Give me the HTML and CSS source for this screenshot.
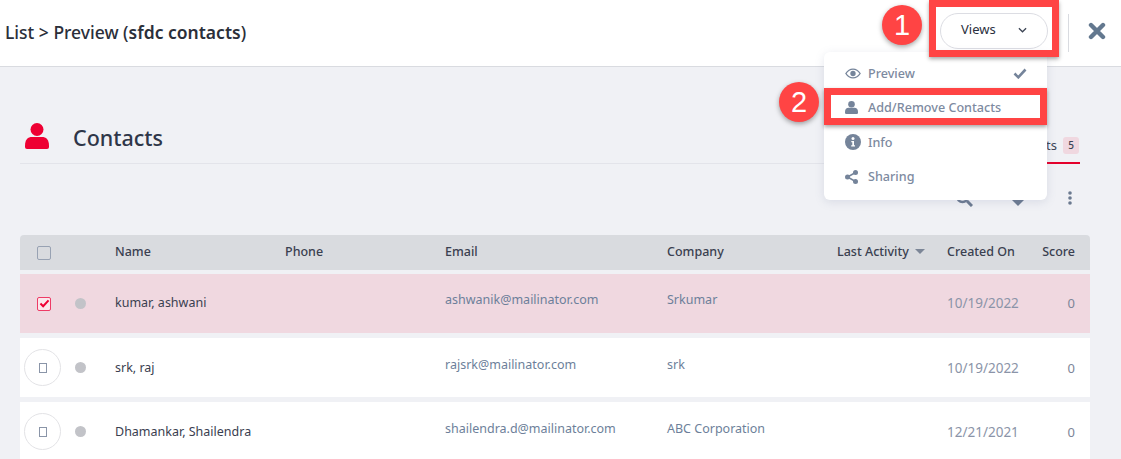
FILE: index.html
```html
<!DOCTYPE html>
<html lang="en">
<head>
<meta charset="utf-8">
<title>List Preview</title>
<link rel="stylesheet" href="styles.css">
</head>
<body>
<div class="page">
  <header class="topbar">
    <h1 class="crumb">List &gt; Preview (<strong>sfdc contacts</strong>)</h1>
    <div class="top-actions">
      <button class="views-btn"><span>Views</span>
        <svg class="chev" viewBox="0 0 10 6" width="9" height="6"><path d="M1 1l4 4 4-4" fill="none" stroke="#3c4454" stroke-width="1.400"/></svg>
      </button>
      <span class="sep"></span>
      <svg class="close" viewBox="0 0 18 18" width="18" height="18"><path d="M3 3l12 12M15 3L3 15" fill="none" stroke="#63788f" stroke-width="4.400" stroke-linecap="round"/></svg>
    </div>
  </header>

  <main class="content">
    <section class="sec-head">
      <svg class="sec-icon" viewBox="0 0 24 26" width="24" height="26"><circle cx="12" cy="6.500" r="6.500" fill="#ee0033"/><path d="M0 22.500c0-6 3-8.500 7-8.500h10c4 0 7 2.500 7 8.500V24a2 2 0 0 1-2 2H2a2 2 0 0 1-2-2z" fill="#ee0033"/></svg>
      <h2 class="sec-title">Contacts</h2>
      <div class="tab"><span>Contacts</span><b class="badge">5</b></div>
    </section>

    <div class="tools">
      <svg class="search" viewBox="0 0 18 18" width="18" height="18"><circle cx="7.500" cy="7.500" r="5.500" fill="none" stroke="#6b7a90" stroke-width="2.400"/><path d="M12 12l5 5" stroke="#6b7a90" stroke-width="3"/></svg>
      <svg viewBox="0 0 12 6" width="12" height="6" class="caret"><path d="M0 0h12L6 6z" fill="#6b7a90"/></svg>
      <svg viewBox="0 0 4 14" width="4" height="14" class="kebab"><circle cx="2" cy="2" r="1.800" fill="#6b7a90"/><circle cx="2" cy="7" r="1.800" fill="#6b7a90"/><circle cx="2" cy="12" r="1.800" fill="#6b7a90"/></svg>
    </div>

    <div class="table">
      <div class="row head">
        <div class="c-sel"><span class="box"></span></div>
        <div>Name</div><div>Phone</div><div>Email</div><div>Company</div>
        <div class="sort">Last Activity <i class="sort-caret"></i></div>
        <div>Created On</div><div class="num">Score</div>
      </div>
      <div class="row body picked">
        <div class="c-sel"><span class="box on"><svg viewBox="0 0 12 10" width="11" height="9"><path d="M1.500 5l3 3 6-6.500" fill="none" stroke="#ee0033" stroke-width="2.200"/></svg></span><span class="dot"></span></div>
        <div class="txt">kumar, ashwani</div><div></div><div class="soft up">ashwanik@mailinator.com</div><div class="soft up">Srkumar</div><div></div><div class="date">10/19/2022</div><div class="num faint">0</div>
      </div>
      <div class="row body">
        <div class="c-sel"><span class="ring"><i></i></span><span class="dot"></span></div>
        <div class="txt">srk, raj</div><div></div><div class="soft up">rajsrk@mailinator.com</div><div class="soft up">srk</div><div></div><div class="date">10/19/2022</div><div class="num faint">0</div>
      </div>
      <div class="row body">
        <div class="c-sel"><span class="ring"><i></i></span><span class="dot"></span></div>
        <div class="txt">Dhamankar, Shailendra</div><div></div><div class="soft up">shailendra.d@mailinator.com</div><div class="soft up">ABC Corporation</div><div></div><div class="date">12/21/2021</div><div class="num faint">0</div>
      </div>
    </div>
  </main>

  <nav class="menu">
    <a class="item"><svg viewBox="0 0 18 12" width="16" height="11"><path d="M1 6c2-3.200 4.800-5 8-5s6 1.800 8 5c-2 3.200-4.800 5-8 5S3 9.200 1 6z" fill="none" stroke="#75849a" stroke-width="1.500"/><circle cx="9" cy="6" r="3" fill="#75849a"/></svg><span>Preview</span><svg class="tick" viewBox="0 0 14 11" width="14" height="11"><path d="M1.500 5.500l3.800 3.800 7.200-7.800" fill="none" stroke="#75849a" stroke-width="2.600"/></svg></a>
    <a class="item"><svg viewBox="0 0 13 13" width="13" height="13"><circle cx="6.500" cy="3.300" r="3.300" fill="#75849a"/><path d="M0 11c0-3 1.500-4.300 3.500-4.300h6c2 0 3.500 1.300 3.500 4.300v.7a1.300 1.300 0 0 1-1.300 1.300H1.300A1.300 1.300 0 0 1 0 11.700z" fill="#75849a"/></svg><span>Add/Remove Contacts</span></a>
    <a class="item"><svg viewBox="0 0 16 16" width="16" height="16"><circle cx="8" cy="8" r="8" fill="#75849a"/><circle cx="8" cy="4.500" r="1.500" fill="#fff"/><path d="M6.300 7h2.700v4.300h1v1.300H6.200v-1.300h1.100V8.300h-1z" fill="#fff"/></svg><span>Info</span></a>
    <a class="item"><svg viewBox="0 0 13 14" width="13" height="14"><path d="M10.500 2.500l-8 4.500 8 4.500" fill="none" stroke="#75849a" stroke-width="1.500"/><circle cx="10.500" cy="2.500" r="2.500" fill="#75849a"/><circle cx="2.500" cy="7" r="2.500" fill="#75849a"/><circle cx="10.500" cy="11.500" r="2.500" fill="#75849a"/></svg><span>Sharing</span></a>
  </nav>

  <span class="mark mark-a"></span>
  <span class="mark mark-b"></span>
  <span class="num-pin pin-a">1</span>
  <span class="num-pin pin-b">2</span>
</div>
</body>
</html>
```
FILE: styles.css
```css
* { box-sizing: border-box; }
html, body { margin: 0; padding: 0; }
body { font-family: "Noto Sans", "Liberation Sans", sans-serif; color: #2e3648; }
.page { position: relative; width: 1121px; height: 459px; overflow: hidden; background: #f0f1f5; }

.topbar { height: 67px; background: #fff; border-bottom: 1px solid #d9dbe0; display: flex; align-items: center; justify-content: space-between; padding: 0 15px 3px 5px; }
.crumb { margin: 0; font-size: 17.500px; font-weight: 500; color: #2b2f3a; }
.crumb strong { font-weight: 600; }
.top-actions { display: flex; align-items: center; }
.views-btn { width: 108px; height: 36px; margin: 0 0 1px 1px; border: 1px solid #dcdde3; border-radius: 18px; background: #fff; display: flex; align-items: center; justify-content: space-between; padding: 0 20px 4px 20px; font: 400 13px "Noto Sans", sans-serif; color: #2b3040; }
.chev { margin-top: 2px; }
.sep { width: 1px; height: 38px; margin: 3px 19px 0 20px; background: #d9dbe0; }
.close { margin-top: -1px; }

.content { padding: 0 31px 0 20px; }
.sec-head { height: 97px; display: flex; align-items: flex-end; border-bottom: 1px solid #e3e4ea; margin-right: 10px; padding: 0 0 0 5px; position: relative; }
.sec-icon { margin-bottom: 14px; }
.sec-title { margin: 0 0 11px 24px; font-size: 21.500px; font-weight: 500; color: #2e3648; flex: 1; }
.tab { height: 27px; display: flex; align-items: flex-start; gap: 6px; padding-right: 1px; font-size: 13px; line-height: 17px; border-bottom: 2px solid #e4002b; margin-bottom: -1px; color: #3d4556; }
.badge { width: 16px; height: 17px; border-radius: 3px; background: #f0d8e0; font-size: 10px; font-weight: 500; text-align: center; line-height: 17px; }

.tools { height: 71px; display: flex; justify-content: flex-end; align-items: flex-start; gap: 44px; padding: 25px 18px 0 0; }
.search { margin-right: -5px; }
.caret { margin-top: 11px; }
.kebab { margin-top: 2px; }

.table { width: 1070px; }
.row { display: grid; grid-template-columns: 95px 170px 160px 222px 170px 110px 94px 1fr; align-items: center; font-size: 12.500px; }
.row.head { height: 35px; padding-bottom: 2px; background: #d9dbdf; border-radius: 4px 4px 0 0; color: #3a4050; font-weight: 500; margin-bottom: 4px; }
.row.head .c-sel { margin-top: 2px; }
.row.body { height: 59px; background: #fff; margin-bottom: 5px; color: #3a4050; }
.row.picked { background: #f0d8e0; }
.picked .txt, .picked .date, .picked .faint { padding-bottom: 2px; }
.picked .up { padding-bottom: 8px; }
.c-sel { display: flex; align-items: center; padding-left: 17px; position: relative; }
.box { width: 14px; height: 14px; border: 1px solid #98a2b3; border-radius: 2px; display: flex; align-items: center; justify-content: center; }
.box.on { border-color: #ee3b66; background: #fbe7ec; }
.dot { position: absolute; left: 55px; width: 11px; height: 11px; border-radius: 50%; background: #c2c3c8; }
.ring { width: 37px; height: 37px; margin-left: -13px; border: 1px solid #e3e3e6; border-radius: 50%; background: #fff; display: flex; align-items: center; justify-content: center; }
.ring i { width: 8px; height: 10px; border: 1px solid #8a95a8; }
.soft { color: #6d7f9a; }
.up { padding-bottom: 6px; }
.date { color: #8b94a8; font-size: 13.500px; }
.faint { color: #7d8699; font-size: 13px; }
.num { text-align: right; padding-right: 15px; }
.sort { display: flex; align-items: center; gap: 4px; }
.sort-caret { width: 0; height: 0; margin-left: 2px; border-left: 5px solid transparent; border-right: 5px solid transparent; border-top: 5px solid #7c8697; }

.menu { position: absolute; left: 824px; top: 52px; width: 223px; height: 148px; background: #fff; border-radius: 6px; box-shadow: 0 2px 10px rgba(110,120,160,.18); padding: 4px 0; display: flex; flex-direction: column; }
.item { height: 34.500px; display: flex; align-items: center; position: relative; padding-left: 44px; font-size: 12.600px; font-weight: 500; color: #7d8aa0; }
.item svg { position: absolute; left: 21px; }
.item .tick { left: auto; right: 20px; }

.mark { position: absolute; border: 7px solid #ff4444; box-shadow: 0 2px 4px rgba(0,0,0,.35); }
.mark-a { left: 929px; top: 0; width: 130px; height: 57px; }
.mark-b { left: 824px; top: 88px; width: 223px; height: 37px; }
.num-pin { position: absolute; width: 40px; height: 40px; border-radius: 50%; background: #ff4444; color: #fff; box-shadow: 0 2px 5px rgba(0,0,0,.35); display: flex; align-items: center; justify-content: center; font: 400 29px "Liberation Sans", sans-serif; }
.pin-a { left: 882px; top: 5px; }
.pin-b { left: 779px; top: 82px; }
```
